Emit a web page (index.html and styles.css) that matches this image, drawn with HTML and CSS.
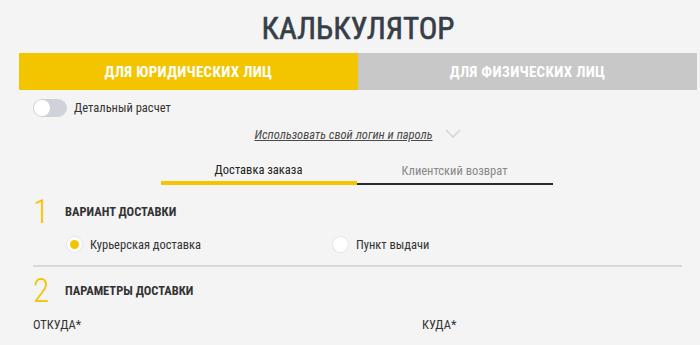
FILE: index.html
```html
<!DOCTYPE html>
<html lang="ru">
<head>
<meta charset="utf-8">
<link rel="stylesheet" href="styles.css">
</head>
<body>
<div class="wrap">
  <h1 class="title">КАЛЬКУЛЯТОР</h1>
  <div class="client-tabs">
    <div class="ctab active">ДЛЯ ЮРИДИЧЕСКИХ ЛИЦ</div>
    <div class="ctab">ДЛЯ ФИЗИЧЕСКИХ ЛИЦ</div>
  </div>
  <div class="inner">
    <div class="toggle-row">
      <span class="toggle"><span class="knob"></span></span>
      <span class="toggle-label">Детальный расчет</span>
    </div>
    <div class="login-row">
      <a class="login-link">Использовать свой логин и пароль</a>
      <svg class="chev" width="16" height="10" viewBox="0 0 16 10"><path d="M1 1 L8 8 L15 1" fill="none" stroke="#d6d6d6" stroke-width="1.6"/></svg>
    </div>
    <div class="mode-tabs">
      <div class="mtab active">Доставка заказа</div>
      <div class="mtab">Клиентский возврат</div>
    </div>
    <div class="section">
      <div class="sec-head"><span class="num">1</span><span class="sec-title">ВАРИАНТ ДОСТАВКИ</span></div>
      <div class="radios">
        <label class="radio checked"><span class="dot"></span>Курьерская доставка</label>
        <label class="radio"><span class="dot"></span>Пункт выдачи</label>
      </div>
    </div>
    <div class="section second">
      <div class="sec-head"><span class="num">2</span><span class="sec-title">ПАРАМЕТРЫ ДОСТАВКИ</span></div>
      <div class="fields">
        <div class="field-label from">ОТКУДА*</div>
        <div class="field-label">КУДА*</div>
      </div>
    </div>
  </div>
</div>
</body>
</html>
```
FILE: styles.css
```css
html, body {
  margin: 0;
  padding: 0;
  background: #f4f4f4;
}
body {
  font-family: "Roboto Condensed", "Liberation Sans Narrow", "Arial Narrow", Roboto, sans-serif;
  color: #333;
  overflow: hidden;
}
.wrap {
  padding: 0 3px 0 19px;
}
.title {
  margin: 0;
  padding-top: 10px;
  height: 53px;
  box-sizing: border-box;
  text-align: center;
  font-size: 31px;
  font-weight: 400;
  -webkit-text-stroke: 0.6px #363e48;
  color: #363e48;
  line-height: 37px;
}
.client-tabs {
  display: flex;
  height: 37px;
}
.ctab {
  flex: 1;
  display: flex;
  align-items: center;
  justify-content: center;
  background: #c8c8c8;
  color: #fff;
  font-size: 15px;
  letter-spacing: 0.3px;
  font-weight: 700;
}
.ctab.active {
  background: #f2c500;
}
.inner {
  padding: 0 15px 0 14px;
}
.toggle-row {
  display: flex;
  align-items: center;
  height: 35px;
}
.toggle {
  width: 34px;
  height: 18px;
  border-radius: 9px;
  background: #cfd2d8;
  position: relative;
  margin-right: 7px;
}
.knob {
  position: absolute;
  left: 1px;
  top: 1px;
  width: 16px;
  height: 16px;
  border-radius: 50%;
  background: #fff;
}
.toggle-label {
  font-size: 12.5px;
  color: #333;
}
.login-row {
  display: flex;
  justify-content: center;
  align-items: center;
  gap: 12px;
  height: 18px;
}
.login-link {
  font-size: 12.5px;
  font-style: italic;
  text-decoration: underline;
  color: #4a4a4a;
}
.mode-tabs {
  display: flex;
  justify-content: center;
  align-items: flex-end;
  margin-top: 19px;
  margin-left: -2px;
}
.mtab {
  width: 196px;
  text-align: center;
  font-size: 12.5px;
  line-height: 16px;
  color: #888;
  height: 16px;
  padding-bottom: 4px;
  border-bottom: 2px solid #2a2a2a;
}
.mtab.active {
  color: #222;
  border-bottom: 4px solid #f2c500;
  padding-bottom: 3px;
}
.section {
  padding-top: 12px;
}
.sec-head {
  display: flex;
  align-items: center;
  height: 28px;
}
.num {
  width: 32px;
  font-size: 34px;
  font-weight: 300;
  color: #f2c500;
  line-height: 28px;
}
.sec-title {
  font-size: 12.5px;
  font-weight: 700;
  color: #333;
}
.radios {
  display: flex;
  margin-top: 4px;
  padding-left: 34px;
  height: 30px;
  align-items: center;
  border-bottom: 2px solid #d9d9d9;
  padding-bottom: 6px;
}
.radio {
  display: flex;
  align-items: center;
  font-size: 12.5px;
  color: #333;
  width: 266px;
}
.dot {
  width: 15px;
  height: 15px;
  border-radius: 50%;
  background: #fff;
  margin-right: 8px;
  box-shadow: 0 0 0 1px #e6e6e6;
  position: relative;
}
.radio.checked .dot::after {
  content: "";
  position: absolute;
  left: 3px;
  top: 3px;
  width: 9px;
  height: 9px;
  border-radius: 50%;
  background: #f2c500;
}
.section.second {
  padding-top: 9px;
}
.fields {
  display: flex;
  margin-top: 13px;
}
.field-label {
  font-size: 12.5px;
  line-height: 15px;
  color: #333;
}
.field-label.from {
  width: 389px;
  flex-shrink: 0;
}
```
